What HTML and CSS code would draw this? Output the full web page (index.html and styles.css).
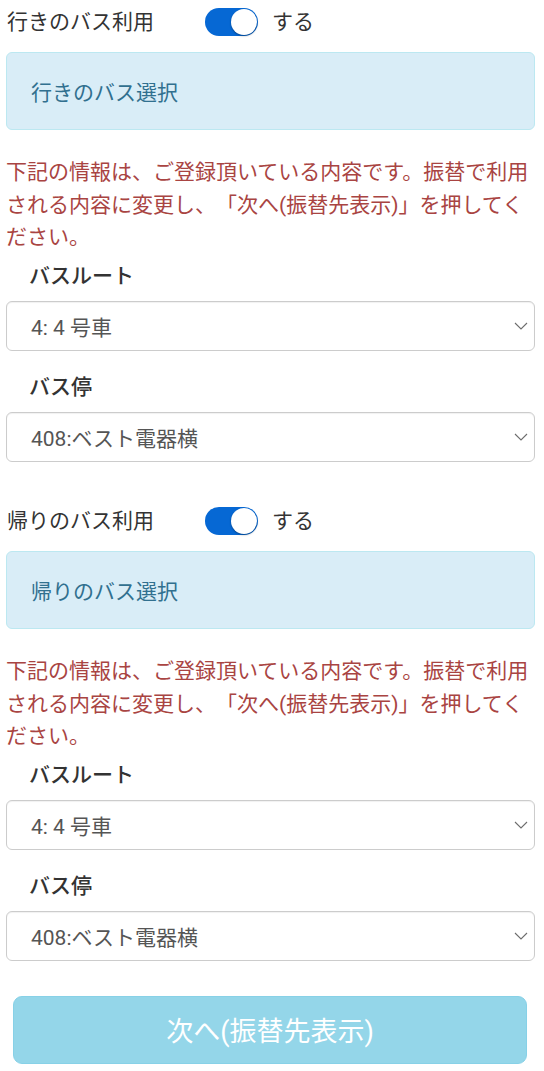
FILE: index.html
```html
<!DOCTYPE html>
<html lang="ja">
<head>
<meta charset="utf-8">
<title>バス利用</title>
<link rel="stylesheet" href="styles.css">
</head>
<body>
<div class="page">
  <section class="section">
    <div class="switch-row">
      <span class="switch-label">行きのバス利用</span>
      <span class="switch"><span class="knob"></span></span>
      <span class="switch-text">する</span>
    </div>
    <div class="alert">行きのバス選択</div>
    <p class="notice">下記の情報は、ご登録頂いている内容です。振替で利用される内容に変更し、「次へ(振替先表示)」を押してください。</p>
    <label class="field-label">バスルート</label>
    <div class="select"><span>4: 4 号車</span><svg class="chev" width="14" height="8" viewBox="0 0 14 8"><polyline points="1,1 7,7 13,1" fill="none" stroke="#6d6d6d" stroke-width="1.1"/></svg></div>
    <label class="field-label second">バス停</label>
    <div class="select"><span>408:ベスト電器横</span><svg class="chev" width="14" height="8" viewBox="0 0 14 8"><polyline points="1,1 7,7 13,1" fill="none" stroke="#6d6d6d" stroke-width="1.1"/></svg></div>
  </section>
  <section class="section">
    <div class="switch-row">
      <span class="switch-label">帰りのバス利用</span>
      <span class="switch"><span class="knob"></span></span>
      <span class="switch-text">する</span>
    </div>
    <div class="alert">帰りのバス選択</div>
    <p class="notice">下記の情報は、ご登録頂いている内容です。振替で利用される内容に変更し、「次へ(振替先表示)」を押してください。</p>
    <label class="field-label">バスルート</label>
    <div class="select"><span>4: 4 号車</span><svg class="chev" width="14" height="8" viewBox="0 0 14 8"><polyline points="1,1 7,7 13,1" fill="none" stroke="#6d6d6d" stroke-width="1.1"/></svg></div>
    <label class="field-label second">バス停</label>
    <div class="select"><span>408:ベスト電器横</span><svg class="chev" width="14" height="8" viewBox="0 0 14 8"><polyline points="1,1 7,7 13,1" fill="none" stroke="#6d6d6d" stroke-width="1.1"/></svg></div>
  </section>
  <button class="next-btn" disabled>次へ(振替先表示)</button>
</div>
</body>
</html>
```
FILE: styles.css
```css
html, body {
  margin: 0;
  padding: 0;
  background: #fff;
}
body {
  font-family: Roboto, "Noto Sans CJK JP", sans-serif;
  font-size: 21px;
  color: #333;
  text-spacing-trim: space-all;
}
.page {
  padding: 0 9px 0 6px;
}
.section {
  margin-bottom: 37px;
}
.switch-row {
  display: flex;
  align-items: center;
  height: 44px;
}
.switch-label {
  width: 199px;
  padding-left: 1px;
  box-sizing: border-box;
  color: #333;
  margin-bottom: 5px;
}
.switch {
  width: 53px;
  height: 28px;
  border-radius: 14px;
  background: #0668d4;
  display: flex;
  align-items: center;
  justify-content: flex-end;
  padding: 0 1px;
  box-sizing: border-box;
}
.knob {
  width: 26px;
  height: 26px;
  border-radius: 50%;
  background: #fff;
  box-shadow: 0 1px 2px rgba(0, 0, 0, 0.35);
}
.switch-text {
  margin-left: 14px;
  margin-bottom: 5px;
  color: #333;
}
.alert {
  margin-top: 8px;
  height: 78px;
  box-sizing: border-box;
  border: 1px solid #bce8f1;
  background: #d9edf7;
  color: #31708f;
  border-radius: 6px;
  padding: 0 24px;
  display: flex;
  align-items: center;
}
.notice {
  margin: 26px 0 0;
  color: #a94442;
  line-height: 32.5px;
}
.field-label {
  display: block;
  margin-top: 7px;
  padding-left: 23px;
  font-weight: 500;
  line-height: 30px;
  color: #333;
}
.field-label.second {
  margin-top: 21.5px;
}
.select {
  margin-top: 10px;
  height: 50px;
  box-sizing: border-box;
  border: 1px solid #ccc;
  border-radius: 6px;
  box-shadow: inset 0 1px 1px rgba(0, 0, 0, 0.06);
  background: #fff;
  display: flex;
  align-items: center;
  justify-content: space-between;
  padding: 0 6px 0 24px;
  color: #555;
}
.chev {
  display: block;
}
.next-btn {
  display: block;
  width: 514px;
  height: 68px;
  margin: -2.5px 0 0 7px;
  border: 1px solid #87d1e7;
  border-radius: 9px;
  background: #94d6e9;
  color: #fff;
  font-family: Roboto, "Noto Sans CJK JP", sans-serif;
  font-size: 27px;
  padding: 0;
}
```
